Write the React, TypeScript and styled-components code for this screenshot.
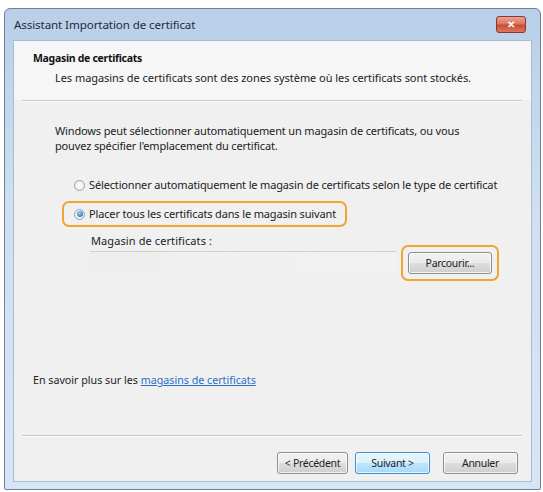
import React from "react";
import styled, { createGlobalStyle } from "styled-components";

const Global = createGlobalStyle`
  html, body { margin: 0; padding: 0; background: #ffffff; }
  body { font-family: "Noto Sans", "Open Sans", sans-serif; }
`;

const Page = styled.div`
  width: 543px;
  height: 492px;
  padding: 8px 2px 2px 4px;
  box-sizing: border-box;
`;

const Window = styled.div`
  width: 537px;
  height: 482px;
  box-sizing: border-box;
  border: 1px solid #6f8197;
  border-radius: 6px 6px 2px 2px;
  background: linear-gradient(180deg, #b9cfe8 0%, #cddff1 40%, #d7e6f5 100%);
  display: flex;
  flex-direction: column;
  padding: 0 8px 7px 8px;
`;

const TitleBar = styled.div`
  height: 31px;
  display: flex;
  align-items: center;
  justify-content: space-between;
  padding: 0 6px 0 1px;
`;

const TitleText = styled.span`
  font-size: 11.6px;
  color: #1e2a3a;
  letter-spacing: -0.1px;
`;

const CloseBtn = styled.div`
  width: 28px;
  height: 15px;
  margin-top: -1px;
  border: 1px solid #8a3a2a;
  border-radius: 3px;
  background: linear-gradient(180deg, #eba393 0%, #de7560 45%, #cc4a30 55%, #dc7a60 100%);
  display: flex;
  align-items: center;
  justify-content: center;
  color: #ffffff;
  font-size: 10px;
  font-weight: bold;
  line-height: 1;
`;

const Client = styled.div`
  flex: 1;
  background: #f0f0f0;
  border: 1px solid #a9bcd3;
  display: flex;
  flex-direction: column;
`;

const Header = styled.div`
  background: #f6f6f6;
  padding: 10px 0 0 19px;
  height: 59px;
  box-sizing: border-box;
`;

const HeaderTitle = styled.div`
  font-size: 10.5px;
  font-weight: bold;
  color: #111;
  letter-spacing: -0.3px;
`;

const HeaderSub = styled.div`
  font-size: 11px;
  color: #222;
  margin: 5px 0 0 22px;
  letter-spacing: -0.05px;
`;

const Separator = styled.div`
  height: 0;
  border-top: 1px solid #c8c8c8;
  border-bottom: 1px solid #ffffff;
  margin: 0 9px 0 8px;
`;

const Body = styled.div`
  flex: 1;
  padding: 21px 0 0 41px;
  display: flex;
  flex-direction: column;
`;

const Para = styled.p`
  margin: 0;
  font-size: 11px;
  line-height: 15px;
  color: #222;
  letter-spacing: -0.15px;
`;

const Options = styled.div`
  margin: 19px 0 0 10px;
  display: flex;
  flex-direction: column;
  gap: 3px;
`;

const OptionRow = styled.label<{ $highlight?: boolean }>`
  display: inline-flex;
  align-items: center;
  gap: 4px;
  align-self: flex-start;
  padding: 4px 9px 4px 10px;
  line-height: 14px;
  border: 2px solid ${(p) => (p.$highlight ? "#f0a431" : "transparent")};
  border-radius: 7px;
  margin-left: -3px;
  font-size: 11px;
  color: #222;
  letter-spacing: -0.15px;
`;

const Radio = styled.span<{ $checked?: boolean }>`
  width: 11px;
  height: 11px;
  border-radius: 50%;
  box-sizing: border-box;
  border: 1px solid #9aa3ad;
  background: radial-gradient(circle, #ffffff 0%, #e2e6ea 100%);
  display: flex;
  align-items: center;
  justify-content: center;
  &::after {
    content: "";
    display: ${(p) => (p.$checked ? "block" : "none")};
    width: 6px;
    height: 6px;
    border-radius: 50%;
    background: radial-gradient(circle at 40% 35%, #9fd0f5 0%, #2f7fc8 70%, #1c5f9e 100%);
  }
`;

const StoreBlock = styled.div`
  margin: 7px 0 0 35px;
  display: flex;
  flex-direction: column;
`;

const StoreLabel = styled.div`
  font-size: 11px;
  line-height: 14px;
  color: #222;
  letter-spacing: 0.1px;
  padding-left: 1px;
`;

const StoreRow = styled.div`
  display: flex;
  align-items: flex-start;
  margin-top: 3px;
`;

const Field = styled.div`
  width: 307px;
  height: 20px;
  border-top: 1px solid #d0d0d0;
  background: linear-gradient(90deg, #eeeeee, #f2f2f2);
`;

const Highlight = styled.div`
  border: 2px solid #f0a431;
  border-radius: 7px;
  padding: 5px;
  margin-left: 4px;
  margin-top: -6px;
`;

const Button = styled.button<{ $default?: boolean }>`
  font-family: "Noto Sans", "Open Sans", sans-serif;
  font-size: 10.5px;
  letter-spacing: -0.3px;
  color: #222;
  height: 22px;
  box-sizing: border-box;
  border: 1px solid ${(p) => (p.$default ? "#3c8fd0" : "#8e8f8f")};
  border-radius: 3px;
  background: ${(p) =>
    p.$default
      ? "linear-gradient(180deg, #eaf6fd 0%, #d9f0fc 50%, #bee6fd 51%, #a7d9f5 100%)"
      : "linear-gradient(180deg, #f2f2f2 0%, #ebebeb 50%, #dddddd 51%, #cfcfcf 100%)"};
  box-shadow: inset 0 0 0 1px rgba(255, 255, 255, 0.7);
  padding: 0;
  display: flex;
  align-items: center;
  justify-content: center;
  cursor: default;
`;

const Browse = styled(Button)`
  width: 84px;
`;

const LinkLine = styled.div`
  margin-top: auto;
  margin-left: -22px;
  margin-bottom: 48px;
  font-size: 10.7px;
  color: #222;
`;

const Link = styled.a`
  color: #2a6fc9;
  text-decoration: underline;
`;

const Footer = styled.div`
  height: 44px;
  box-sizing: border-box;
  display: flex;
  align-items: flex-start;
  justify-content: flex-end;
  padding: 15px 13px 0 0;
`;

const FooterBtn = styled(Button)<{ $w: number; $gap: number }>`
  width: ${(p) => p.$w}px;
  margin-right: ${(p) => p.$gap}px;
`;

export default function App() {
  return (
    <>
      <Global />
      <Page>
        <Window>
          <TitleBar>
            <TitleText>Assistant Importation de certificat</TitleText>
            <CloseBtn>✕</CloseBtn>
          </TitleBar>
          <Client>
            <Header>
              <HeaderTitle>Magasin de certificats</HeaderTitle>
              <HeaderSub>
                Les magasins de certificats sont des zones système où les certificats sont stockés.
              </HeaderSub>
            </Header>
            <Separator />
            <Body>
              <Para>
                Windows peut sélectionner automatiquement un magasin de certificats, ou vous
                <br />
                pouvez spécifier l'emplacement du certificat.
              </Para>
              <Options>
                <OptionRow>
                  <Radio />
                  Sélectionner automatiquement le magasin de certificats selon le type de certificat
                </OptionRow>
                <OptionRow $highlight>
                  <Radio $checked />
                  Placer tous les certificats dans le magasin suivant
                </OptionRow>
              </Options>
              <StoreBlock>
                <StoreLabel>Magasin de certificats :</StoreLabel>
                <StoreRow>
                  <Field />
                  <Highlight>
                    <Browse>Parcourir...</Browse>
                  </Highlight>
                </StoreRow>
              </StoreBlock>
              <LinkLine>
                En savoir plus sur les <Link href="#">magasins de certificats</Link>
              </LinkLine>
            </Body>
            <Separator />
            <Footer>
              <FooterBtn $w={71} $gap={7}>&lt; Précédent</FooterBtn>
              <FooterBtn $w={75} $gap={13} $default>Suivant &gt;</FooterBtn>
              <FooterBtn $w={75} $gap={0}>Annuler</FooterBtn>
            </Footer>
          </Client>
        </Window>
      </Page>
    </>
  );
}
